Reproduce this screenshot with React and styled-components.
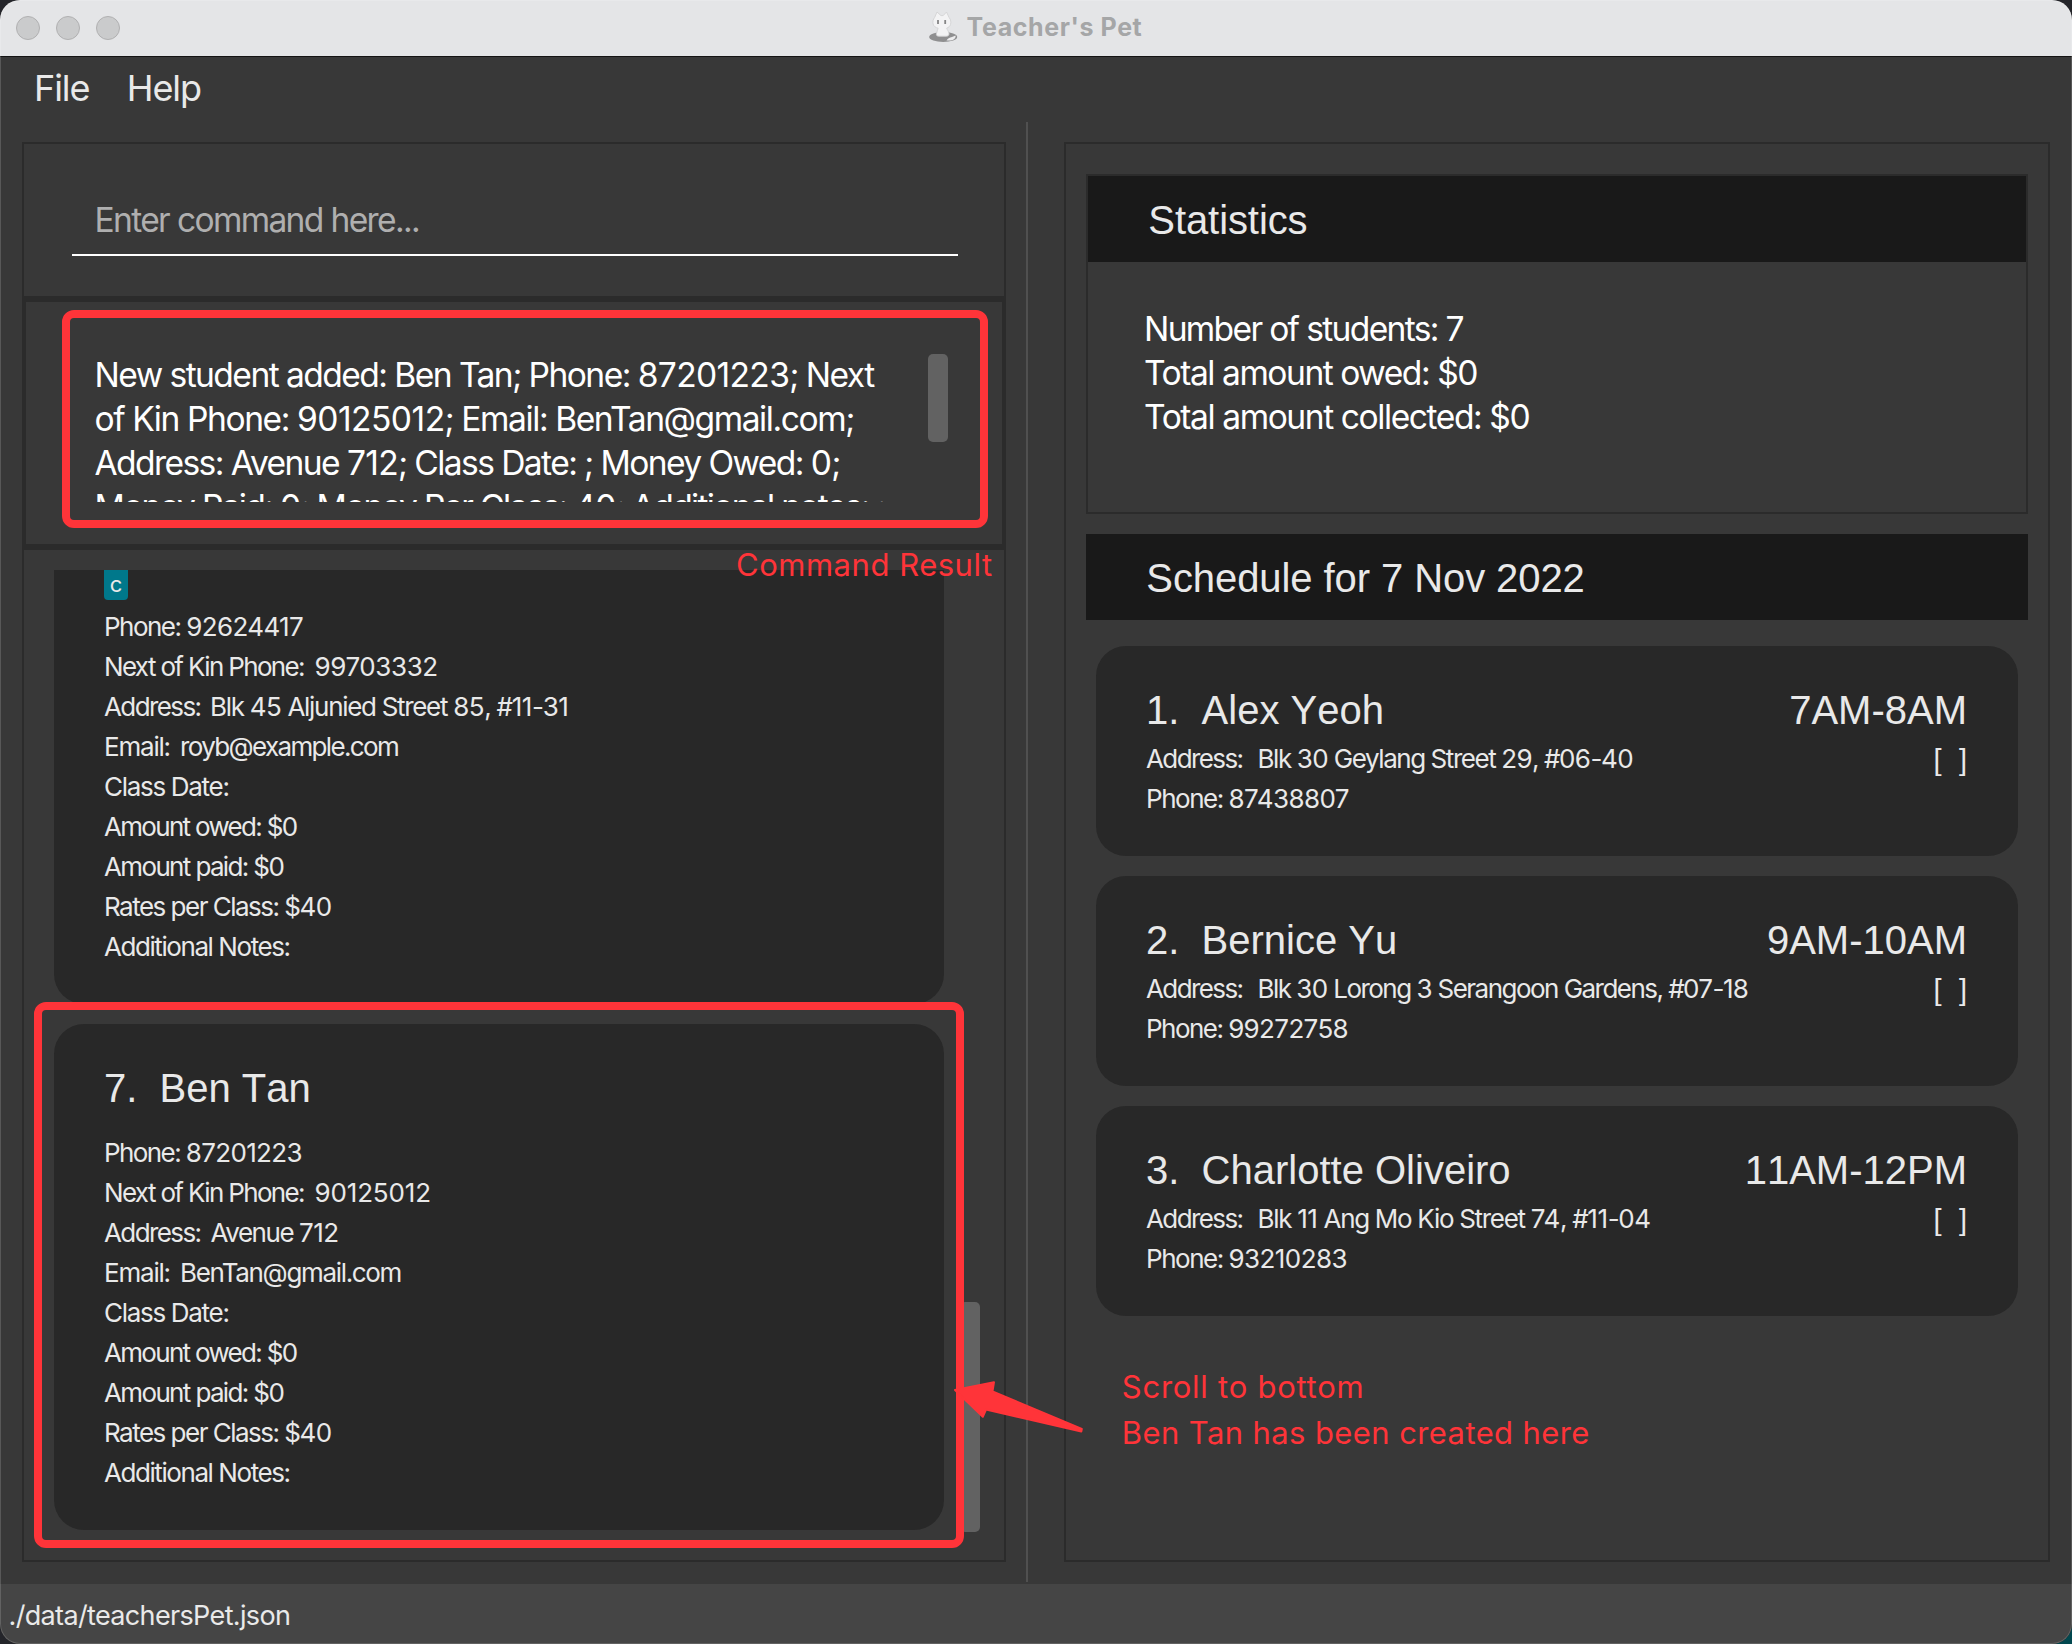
import React from "react";
import styled, { createGlobalStyle } from "styled-components";

const UI_FONT = `Inter, "Liberation Sans", sans-serif`;
const HEADING_FONT = `"Liberation Sans", Arial, sans-serif`;

const color = {
  base: "#383838",
  line: "#2b2b2b",
  card: "#282828",
  header: "#191919",
  text: "#e9e9e9",
  thumb: "#626262",
  note: "#ff3439",
};

const GlobalStyle = createGlobalStyle`
  *, *::before, *::after { box-sizing: border-box; }
  body { margin: 0; overflow: hidden; }
`;

/* ---------- window ---------- */

const Desktop = styled.div`
  width: 2072px;
  height: 1644px;
  background: linear-gradient(135deg, #24252a 0 90%, #02484f 90%);
`;

const Window = styled.div`
  position: relative;
  display: flex;
  flex-direction: column;
  height: 100%;
  overflow: hidden;
  border-radius: 20px;
  background: ${color.base};
  color: ${color.text};
  font-family: ${UI_FONT};

  &::after {
    content: "";
    position: absolute;
    inset: 0;
    border-radius: inherit;
    box-shadow: inset 0 0 0 1px rgba(255, 255, 255, 0.16);
    pointer-events: none;
  }
`;

const TitleBar = styled.header`
  display: grid;
  grid-template-columns: 1fr auto 1fr;
  align-items: center;
  flex: none;
  height: 57px;
  padding: 0 17px 0 16px;
  background: #e4e5e7;
  border-bottom: 1px solid #141414;
`;

const Lights = styled.div`
  display: flex;
  gap: 16px;
`;

const Light = styled.span`
  width: 24px;
  height: 24px;
  border: 1px solid #b0b0b1;
  border-radius: 50%;
  background: #cacbcc;
`;

const WindowTitle = styled.div`
  display: flex;
  align-items: flex-start;
  gap: 9px;
  height: 54px;
  color: #a5a6a7;
  font-size: 25px;
  font-weight: 700;
  line-height: 53px;
  letter-spacing: 0.6px;

  svg {
    margin-top: 10px;
  }
`;

const MenuBar = styled.nav`
  display: flex;
  gap: 37.5px;
  flex: none;
  height: 65px;
  padding: 1px 34px 0;
`;

const MenuItem = styled.span`
  font-size: 36px;
  line-height: 60px;
  letter-spacing: -1.1px;
`;

const SplitPane = styled.main`
  display: grid;
  grid-template-columns: 1026px 2px 1fr;
  flex: none;
  height: 1462px;
`;

const Divider = styled.div`
  height: 1460px;
  background: #505050;
`;

const StatusBar = styled.footer`
  flex: 1;
  padding-left: 8.5px;
  background: #454545;
  font-size: 27px;
  line-height: 63px;
  letter-spacing: -0.65px;
`;

/* ---------- shared text ---------- */

const Text = styled.span`
  letter-spacing: ${(p) => p.$track}px;
`;

const Line = styled.div`
  height: 44px;
  font-size: 33.6px;
  line-height: 44px;
  white-space: pre;
  color: #fff;
`;

const Field = styled.div`
  display: flex;
  height: 40px;
  font-size: 26px;
  line-height: 40px;
  white-space: pre;
`;

const Label = styled.span`
  width: ${(p) => p.$width}px;
  letter-spacing: ${(p) => p.$track}px;
`;

const Heading = styled.h2`
  margin: 0;
  font-family: ${HEADING_FONT};
  font-size: 40px;
  font-weight: 400;
  font-kerning: none;
  white-space: pre;
`;

/* ---------- left column ---------- */

const LeftColumn = styled.section`
  display: flex;
  flex-direction: column;
  padding: 20px 20px 22px 22px;
`;

const CommandBox = styled.div`
  height: 156px;
  padding: 54px 46px 0 48px;
  border: 2px solid ${color.line};
`;

const CommandInput = styled.div`
  height: 58px;
  padding-left: 22.5px;
  border-bottom: 2px solid #fff;
  color: #afafaf;
  font-size: 33.6px;
  line-height: 44px;
  letter-spacing: -1.66px;
`;

const ResultBox = styled.div`
  display: flex;
  justify-content: space-between;
  height: 250px;
  padding: 51px 54px 42px 68.5px;
  border: 4px solid ${color.line};
`;

const ResultText = styled.div`
  overflow: hidden;
`;

const Thumb = styled.div`
  flex: none;
  width: 20px;
  height: ${(p) => p.$height}px;
  margin-top: ${(p) => p.$top}px;
  border-radius: 5px;
  background: ${color.thumb};
`;

const ListBox = styled.div`
  display: flex;
  flex: 1;
  gap: 16px;
  padding: 20px 24px 28px 30px;
  border: 2px solid ${color.line};
`;

const StudentList = styled.div`
  display: flex;
  flex-direction: column;
  gap: 20px;
  width: 890px;
`;

const StudentCard = styled.article`
  height: ${(p) => (p.$cut ? 434 : 506)}px;
  padding: ${(p) => (p.$cut ? 0 : 34)}px 50px 0;
  border-radius: ${(p) => (p.$cut ? "0 0 30px 30px" : "30px")};
  background: ${color.card};
`;

const StudentName = styled(Heading)`
  margin-bottom: 15px;
  line-height: 60px;
`;

const Tag = styled.span`
  display: block;
  width: 24px;
  height: 30px;
  margin-bottom: 7px;
  border-radius: 0 0 4px 4px;
  background: #00788b;
  font-size: 22px;
  line-height: 28px;
  text-align: center;
`;

/* ---------- right column ---------- */

const RightColumn = styled.section`
  padding: 20px 22px 22px 36px;
`;

const RightBox = styled.div`
  display: flex;
  flex-direction: column;
  height: 100%;
  padding: 30px 20px 0;
  border: 2px solid ${color.line};
`;

const StatsBox = styled.div`
  height: 340px;
  margin-bottom: 20px;
  border: 2px solid ${color.line};
`;

const StatsBody = styled.div`
  padding: 44.5px 0 0 56px;
`;

const SectionHeader = styled(Heading)`
  flex: none;
  height: 86px;
  padding-left: 60.3px;
  background: ${color.header};
  line-height: 88px;
  letter-spacing: -0.08px;
`;

const ScheduleList = styled.div`
  display: flex;
  flex-direction: column;
  gap: 20px;
  padding: 26px 10px 0;
`;

const ScheduleCard = styled.article`
  display: flex;
  justify-content: space-between;
  height: 210px;
  padding: 39px 51px 0 50px;
  border-radius: 30px;
  background: ${color.card};
`;

const ScheduleName = styled(Heading)`
  margin-bottom: 4px;
  line-height: 50px;
`;

const Slot = styled.div`
  text-align: right;
`;

const SlotTime = styled(Heading)`
  line-height: 50px;
`;

const SlotMark = styled.div`
  margin-top: 5px;
  font-family: ${HEADING_FONT};
  font-size: 29px;
  line-height: 40px;
  word-spacing: 0.6px;
  white-space: pre;
`;

/* ---------- annotations ---------- */

const NoteFrame = styled.div`
  position: absolute;
  left: ${(p) => p.$x}px;
  top: ${(p) => p.$y}px;
  width: ${(p) => p.$w}px;
  height: ${(p) => p.$h}px;
  border: 8px solid ${color.note};
  border-radius: 12px;
`;

const NoteText = styled.div`
  position: absolute;
  left: ${(p) => p.$x}px;
  top: ${(p) => p.$y}px;
  color: ${color.note};
  font-size: 31px;
  font-weight: 430;
  line-height: 46px;
  white-space: pre;
`;

const NoteArrow = styled.svg`
  position: absolute;
  left: 950px;
  top: 1376px;
`;

/* ---------- data ---------- */

const resultLines = [
  ["New student added: Ben Tan; Phone: 87201223; Next", -1.41],
  ["of Kin Phone: 90125012; Email: BenTan@gmail.com;", -1.28],
  ["Address: Avenue 712; Class Date: ; Money Owed: 0;", -1.52],
  ["Money Paid: 0; Money Per Class: 40; Additional notes: ;", -1.64],
];

const statLines = [
  ["Number of students: 7", -1.62],
  ["Total amount owed: $0", -1.42],
  ["Total amount collected: $0", -1.39],
];

const commonRows = [
  { text: "Class Date:", track: -1.3 },
  { text: "Amount owed: $0", track: -1.63 },
  { text: "Amount paid: $0", track: -1.58 },
  { text: "Rates per Class: $40", track: -1.42 },
  { text: "Additional Notes:", track: -1.43 },
];

const royRows = [
  { text: "Phone: 92624417", track: -1.05 },
  { label: "Next of Kin Phone:", width: 210.5, labelTrack: -1.65, text: "99703332", track: -0.4 },
  { label: "Address:", width: 106, labelTrack: -1.6, text: "Blk 45 Aljunied Street 85, #11-31", track: -1.09 },
  { label: "Email:", width: 76, labelTrack: -1.2, text: "royb@example.com", track: -1.65 },
  ...commonRows,
];

const benRows = [
  { text: "Phone: 87201223", track: -1.1 },
  { label: "Next of Kin Phone:", width: 210.5, labelTrack: -1.65, text: "90125012", track: -0.15 },
  { label: "Address:", width: 106.5, labelTrack: -1.6, text: "Avenue 712", track: -1.17 },
  { label: "Email:", width: 76, labelTrack: -1.2, text: "BenTan@gmail.com", track: -1.33 },
  ...commonRows,
];

const schedule = [
  { name: "1.  Alex Yeoh", time: "7AM-8AM", address: "Blk 30 Geylang Street 29, #06-40", track: -1.22, phone: "Phone: 87438807", phoneTrack: -0.99 },
  { name: "2.  Bernice Yu", time: "9AM-10AM", address: "Blk 30 Lorong 3 Serangoon Gardens, #07-18", track: -1.38, phone: "Phone: 99272758", phoneTrack: -1.06 },
  { name: "3.  Charlotte Oliveiro", time: "11AM-12PM", address: "Blk 11 Ang Mo Kio Street 74, #11-04", track: -1.1, phone: "Phone: 93210283", phoneTrack: -1.0 },
];

/* ---------- parts ---------- */

function CatIcon() {
  return (
    <svg width="29" height="32" viewBox="0 0 29 32">
      <ellipse cx="14.2" cy="26" rx="14" ry="5" fill="#8f8f90" />
      <path d="M17.5 29.6c1-2.200 3-2.900 5.500-3.600l3.600-1.500c.4 2.600-1.800 4.700-5.300 5.100z" fill="#ececed" />
      <path
        d="M8 1l4 3.600h2.200L17.500 1l2.600 5.500c1.700 2 2.200 4.800 1.400 7-.6 1.900-2 3-3.800 3.600.4 1.700 2.300 3.600 2.300 5.700 0 1.700-1 2.400-2.600 2.400H9.800c-1.700 0-2.600-.8-2.400-2.500.3-2.100 1.500-3.800 1.700-5.500-2.300-.5-4.400-1.800-5-4.200-.6-2.300 0-4.700 1.500-6.500z"
        fill="#f3f3f4"
        stroke="#d3d3d4"
        strokeWidth="0.9"
        strokeLinejoin="round"
      />
      <path d="M9 9v4M16.200 9v4" stroke="#858586" strokeWidth="1.800" />
    </svg>
  );
}

const DIGIT_EXTRA = 0.9;

/* Numbers are set a little looser than letters; `track` is the line's average. */
function Tracked({ text, track }) {
  const digits = text.replace(/\D/g, "").length;
  const letterTrack = track - (DIGIT_EXTRA * digits) / text.length;
  return (
    <Text $track={letterTrack}>
      {text.split(/(\d+)/).map((part, i) =>
        i % 2 ? (
          <Text key={i} $track={letterTrack + DIGIT_EXTRA}>{part}</Text>
        ) : (
          part
        )
      )}
    </Text>
  );
}

function Rows({ rows }) {
  return rows.map((row) => (
    <Field key={row.label || row.text}>
      {row.label && (
        <Label $width={row.width} $track={row.labelTrack}>
          {row.label}
        </Label>
      )}
      <Tracked text={row.text} track={row.track} />
    </Field>
  ));
}

export default function App() {
  return (
    <Desktop>
      <GlobalStyle />
      <Window>
        <TitleBar>
          <Lights>
            <Light />
            <Light />
            <Light />
          </Lights>
          <WindowTitle>
            <CatIcon />
            Teacher's Pet
          </WindowTitle>
        </TitleBar>
        <MenuBar>
          <MenuItem>File</MenuItem>
          <MenuItem>Help</MenuItem>
        </MenuBar>
        <SplitPane>
          <LeftColumn>
            <CommandBox>
              <CommandInput>Enter command here...</CommandInput>
            </CommandBox>
            <ResultBox>
              <ResultText>
                {resultLines.map(([text, track]) => (
                  <Line key={text}><Tracked text={text} track={track} /></Line>
                ))}
              </ResultText>
              <Thumb $height={88} $top={1} />
            </ResultBox>
            <ListBox>
              <StudentList>
                <StudentCard $cut>
                  <Tag>c</Tag>
                  <Rows rows={royRows} />
                </StudentCard>
                <StudentCard>
                  <StudentName>{"7.  Ben Tan"}</StudentName>
                  <Rows rows={benRows} />
                </StudentCard>
              </StudentList>
              <Thumb $height={230} $top={732} />
            </ListBox>
          </LeftColumn>
          <Divider />
          <RightColumn>
            <RightBox>
              <StatsBox>
                <SectionHeader>Statistics</SectionHeader>
                <StatsBody>
                  {statLines.map(([text, track]) => (
                    <Line key={text}><Tracked text={text} track={track} /></Line>
                  ))}
                </StatsBody>
              </StatsBox>
              <SectionHeader>Schedule for 7 Nov 2022</SectionHeader>
              <ScheduleList>
                {schedule.map((s) => (
                  <ScheduleCard key={s.name}>
                    <div>
                      <ScheduleName>{s.name}</ScheduleName>
                      <Field>
                        <Label $width={111.5} $track={-1.6}>Address:</Label>
                        <Tracked text={s.address} track={s.track} />
                      </Field>
                      <Field>
                        <Tracked text={s.phone} track={s.phoneTrack} />
                      </Field>
                    </div>
                    <Slot>
                      <SlotTime>{s.time}</SlotTime>
                      <SlotMark>{"[  ]"}</SlotMark>
                    </Slot>
                  </ScheduleCard>
                ))}
              </ScheduleList>
            </RightBox>
          </RightColumn>
        </SplitPane>
        <StatusBar>./data/teachersPet.json</StatusBar>

        <NoteFrame $x={62} $y={310} $w={926} $h={218} />
        <NoteFrame $x={34} $y={1002} $w={930} $h={546} />
        <NoteArrow width="140" height="64" viewBox="950 1376 140 64">
          <path
            d="M955 1390L994 1382.200L992.500 1391.400L1081.800 1429L1081.300 1431.500L986 1409.500L982.800 1416.800Z"
            fill={color.note}
            stroke={color.note}
            strokeWidth="2"
            strokeLinejoin="round"
          />
        </NoteArrow>
        <NoteText $x={736} $y={541.5}>
          <Text $track={0.52}>Command Result</Text>
        </NoteText>
        <NoteText $x={1121.8} $y={1363.5}>
          <Text $track={0.74}>Scroll to bottom</Text>
          {"\n"}
          <Text $track={0.4}>Ben Tan has been created here</Text>
        </NoteText>
      </Window>
    </Desktop>
  );
}
